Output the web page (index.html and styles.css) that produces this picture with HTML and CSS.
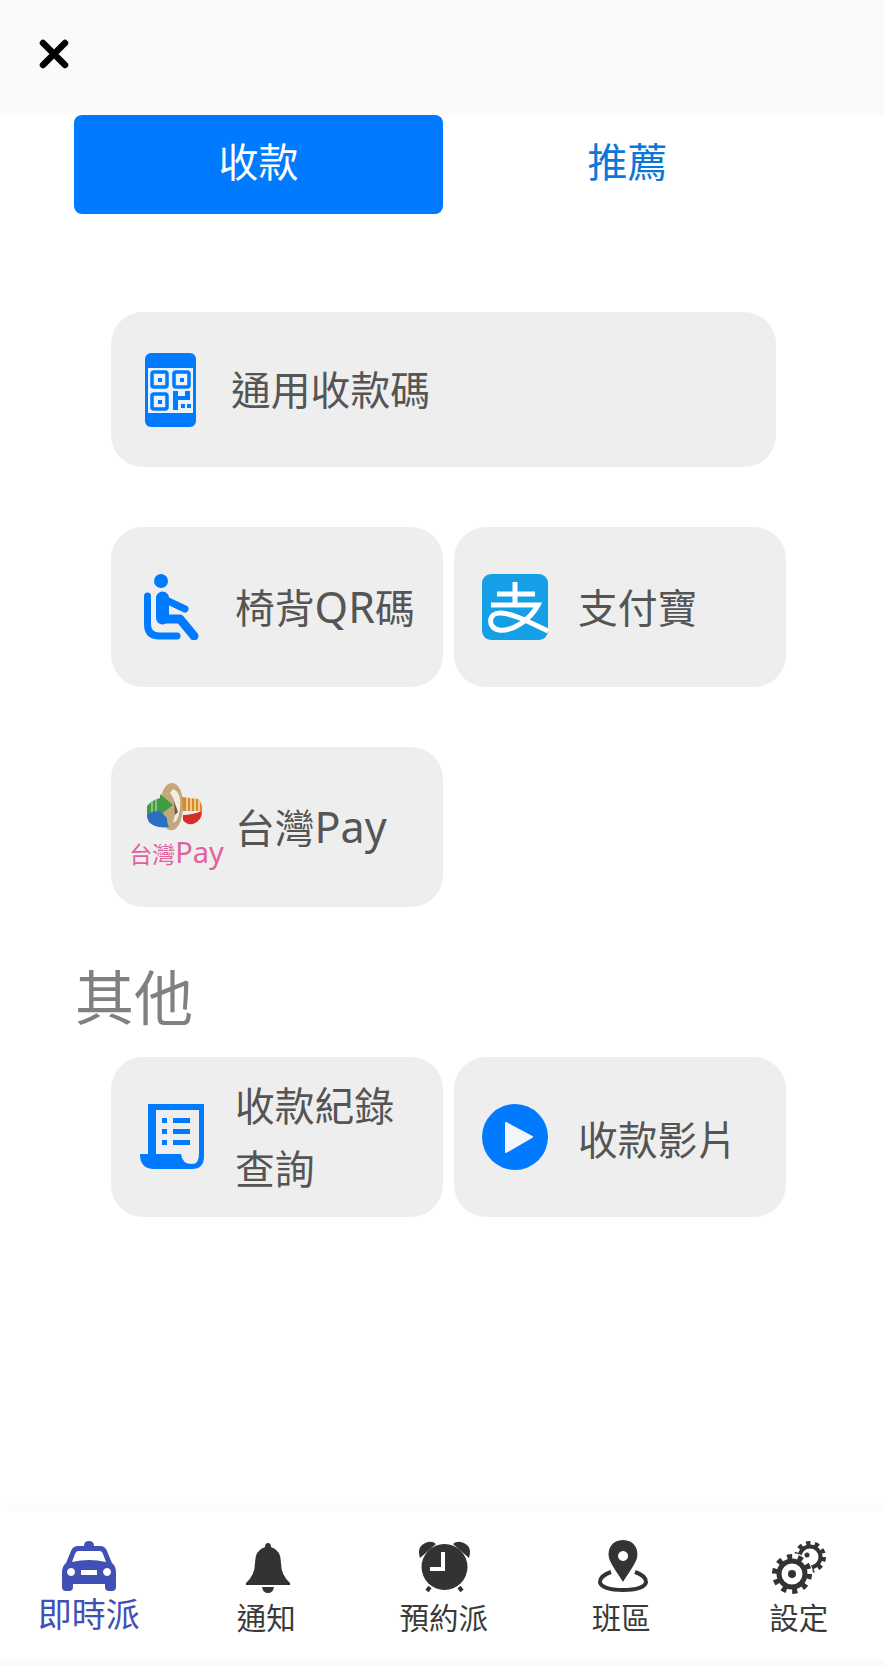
FILE: index.html
```html
<!DOCTYPE html>
<html lang="zh-Hant">
<head>
  <meta charset="UTF-8">
  <meta name="viewport" content="width=device-width, initial-scale=1.0">
  <title>收款</title>
  <link rel="stylesheet" href="styles.css">
</head>
<body>
  <div class="topbar">
    <svg class="close-icon" viewBox="0 0 30 30"><path d="M4 4 L26 26 M26 4 L4 26"/></svg>
  </div>

  <div class="tabs">
    <div class="tab active">收款</div>
    <div class="tab">推薦</div>
  </div>

  <div class="content">
    <div class="row first">
      <div class="card wide">
        <div class="card-icon">
          <svg width="51" height="74" viewBox="0 0 51 74">
            <rect width="51" height="74" rx="6" fill="#007aff"/>
            <rect x="3" y="15" width="45" height="45" fill="#eaf2fb"/>
            <g fill="none" stroke="#007aff" stroke-width="3.500">
              <rect x="7" y="19" width="15" height="15" rx="2"/>
              <rect x="29" y="19" width="15" height="15" rx="2"/>
              <rect x="7" y="41" width="15" height="15" rx="2"/>
            </g>
            <g fill="#007aff">
              <rect x="13" y="25" width="4" height="4"/>
              <rect x="35" y="25" width="4" height="4"/>
              <rect x="13" y="47" width="4" height="4"/>
              <path d="M28 38h5v5h7v-5h5v9H33v10h-5z"/>
              <rect x="36" y="51" width="4" height="4"/>
              <rect x="42" y="51" width="4" height="4"/>
            </g>
          </svg>
        </div>
        <div class="card-text">通用收款碼</div>
      </div>
    </div>

    <div class="row">
      <div class="card">
        <div class="card-icon">
          <svg width="56" height="66" viewBox="0 0 56 66">
            <circle cx="17" cy="7" r="7" fill="#007aff"/>
            <g fill="none" stroke="#007aff" stroke-linecap="round" stroke-linejoin="round">
              <path d="M3.500 22 V50 Q3.500 62 15 62 H33" stroke-width="7"/>
              <path d="M18.500 24 V44" stroke-width="13"/>
              <path d="M18 45 H36 L50 62" stroke-width="9"/>
              <path d="M22 26 L41 35" stroke-width="7"/>
            </g>
          </svg>
        </div>
        <div class="card-text">椅背<span class="latin">QR</span>碼</div>
      </div>
      <div class="card">
        <div class="card-icon">
          <svg width="66" height="66" viewBox="0 0 66 66">
            <rect width="66" height="66" rx="9" fill="#149fe6"/>
            <g fill="none" stroke="#fff" stroke-width="5">
              <path d="M15 20 H53"/>
              <path d="M33 8 V31"/>
              <path d="M9 31 H56 C48 46 30 58 17 56 C5 54 6 38 19 39 C32 40 47 48 66 57"/>
            </g>
          </svg>
        </div>
        <div class="card-text">支付寶</div>
      </div>
    </div>

    <div class="row">
      <div class="card">
        <div class="card-icon">
          <div class="twpay">
            <svg width="60" height="50" viewBox="0 0 60 50">
              <path d="M25 1 C33 0 38 12 37 26 C36 40 31 50 24 48 C17 47 13 36 14 23 C15 10 19 2 25 1z" fill="#c4a77d"/>
              <path d="M27 7 C33 9 35 16 34 26 C33 36 30 41 27 40 C30 33 31 18 24 11z" fill="#f3ece0"/>
              <path d="M28 19 L32 30 L29 33z" fill="#6e5a3e"/>
              <path d="M1 24 Q6 18 14 16 V12 L27 23 L14 33 V29 Q7 30 1 36z" fill="#3f9c45"/>
              <path d="M6 19 V30 M10 17 V29" stroke="#9fd09a" stroke-width="1.500"/>
              <path d="M1 33 Q7 29 14 29 L21 36 Q21 42 23 45 Q9 47 3 40 Q1 37 1 33z" fill="#2b6fc4"/>
              <path d="M36 15 L52 17 Q57 22 56 29 L37 29z" fill="#d98a2e"/>
              <path d="M41 15 V29 M45 16 V29 M49 16 V29 M53 18 V29" stroke="#f4dfae" stroke-width="1.500"/>
              <path d="M37 33 Q46 33 56 29 Q56 39 47 42 Q40 43 37 38z" fill="#d92b25"/>
            </svg>
            <div class="twpay-name">台灣<span class="twpay-latin">Pay</span></div>
          </div>
        </div>
        <div class="card-text">台灣<span class="latin">Pay</span></div>
      </div>
    </div>

    <h2 class="section-title">其他</h2>

    <div class="row">
      <div class="card">
        <div class="card-icon">
          <svg width="64" height="66" viewBox="0 0 64 66">
            <path fill="#007aff" fill-rule="evenodd" d="M8 0 H64 V52 Q64 65 52 65 H14 Q0 65 0 50 H8z M16 6 V50 H41 Q42 60 52 60 Q59 60 59 50 V6z"/>
            <g fill="#007aff">
              <rect x="22" y="14" width="5" height="5"/>
              <rect x="33" y="14" width="17" height="5"/>
              <rect x="22" y="25" width="5" height="5"/>
              <rect x="33" y="25" width="17" height="5"/>
              <rect x="22" y="36" width="5" height="5"/>
              <rect x="33" y="36" width="17" height="5"/>
            </g>
          </svg>
        </div>
        <div class="card-text">收款紀錄<br>查詢</div>
      </div>
      <div class="card">
        <div class="card-icon">
          <svg width="66" height="66" viewBox="0 0 66 66">
            <circle cx="33" cy="33" r="33" fill="#007aff"/>
            <path d="M24 19 L50 33 L24 48z" fill="#f2f6fb" stroke="#f2f6fb" stroke-width="2" stroke-linejoin="round"/>
          </svg>
        </div>
        <div class="card-text low">收款影片</div>
      </div>
    </div>
  </div>

  <div class="bottom-nav">
    <div class="nav-item active">
      <svg width="54" height="50" viewBox="0 0 54 50">
        <path fill="#3f51b5" fill-rule="evenodd" d="M22 5 Q22 0 27 0 Q32 0 32 5 H38 Q43 5 45 10 L50 22 Q54 25 54 32 V46 Q54 50 50 50 H47 Q43 50 43 46 V43 H11 V46 Q11 50 7 50 H4 Q0 50 0 46 V32 Q0 25 4 22 L9 10 Q11 5 16 5z M16 10 Q14 10 13 13 L10 21 Q27 17 44 21 L41 13 Q40 10 38 10z M9 27 a4 4 0 1 0 0.100 0z M45 27 a4 4 0 1 0 0.100 0z M19 29 V34 H35 V29z"/>
      </svg>
      <span>即時派</span>
    </div>
    <div class="nav-item">
      <svg width="44" height="50" viewBox="-2 -2 44 50">
        <path fill="#333" d="M22 0 Q25 0 25 4 Q35 7 35 20 Q35 32 44 40 V42 H0 V40 Q9 32 9 20 Q9 7 19 4 Q19 0 22 0z M16 44 H28 Q27 50 22 50 Q17 50 16 44z"/>
      </svg>
      <span>通知</span>
    </div>
    <div class="nav-item">
      <svg width="53" height="50" viewBox="-1 0 53 50">
        <circle cx="26.500" cy="26" r="23" fill="#333"/>
        <path d="M2 17 Q-2 4 10 1 Q15 0 18 3z M51 17 Q55 4 43 1 Q38 0 35 3z" fill="#333"/>
        <path d="M12 46 L9 50 M41 46 L44 50" stroke="#333" stroke-width="4"/>
        <path d="M25 11 V28 H12" fill="none" stroke="#fff" stroke-width="4"/>
      </svg>
      <span>預約派</span>
    </div>
    <div class="nav-item">
      <svg width="50" height="52" viewBox="-2 0 50 52">
        <path fill="#333" fill-rule="evenodd" d="M25 0 C36 0 41 9 39 18 C37 25 29 35 25 42 C21 35 13 25 11 18 C9 9 14 0 25 0z M25 11 a5 5 0 1 0 0.100 0z"/>
        <path d="M13 32 C4 35 2 39 2 42 C2 47 12 50 25 50 C38 50 48 47 48 42 C48 39 46 35 37 32" fill="none" stroke="#333" stroke-width="4"/>
      </svg>
      <span>班區</span>
    </div>
    <div class="nav-item">
      <svg width="54" height="54" viewBox="0 -2 54 54">
        <g fill="none" stroke="#333">
          <circle cx="38" cy="16" r="10.500" stroke-width="4"/>
          <circle cx="38" cy="16" r="14" stroke-width="4" stroke-dasharray="4.400 4.400"/>
        </g>
        <circle cx="35" cy="14" r="2.500" fill="#333"/>
        <circle cx="20" cy="33" r="21" fill="#fff"/>
        <g fill="none" stroke="#333">
          <circle cx="20" cy="33" r="13" stroke-width="5"/>
          <circle cx="20" cy="33" r="17" stroke-width="6" stroke-dasharray="5 5.680"/>
        </g>
        <circle cx="20" cy="33" r="4" fill="#333"/>
      </svg>
      <span>設定</span>
    </div>
  </div>
</body>
</html>
```

FILE: styles.css
```css
* {
  margin: 0;
  padding: 0;
  box-sizing: border-box;
  font-family: 'Noto Sans', 'Noto Sans CJK TC', sans-serif;
}

body {
  width: 100%;
  height: 100vh;
  display: flex;
  flex-direction: column;
  background: #fff;
  overflow: hidden;
}

.topbar {
  height: 115px;
  padding: 39px 0 0 39px;
  background: #fafafa;
  flex-shrink: 0;
}

.close-icon {
  display: block;
  width: 30px;
  height: 30px;
}

.close-icon path {
  fill: none;
  stroke: #000;
  stroke-width: 6.500;
  stroke-linecap: round;
}

.tabs {
  display: flex;
  margin-left: 74px;
  flex-shrink: 0;
}

.tab {
  width: 369px;
  height: 99px;
  padding-bottom: 10px;
  display: flex;
  align-items: center;
  justify-content: center;
  font-size: 40px;
  color: #0a78d8;
  border-radius: 8px;
}

.tab.active {
  background: #007aff;
  color: #fff;
}

.content {
  flex: 1;
}

.row {
  display: flex;
  gap: 11px;
  margin: 60px 0 0 111px;
}

.row.first {
  margin-top: 98px;
}

.card {
  width: 332px;
  height: 160px;
  display: flex;
  align-items: center;
  background: #eee;
  border-radius: 32px;
}

.card.wide {
  width: 665px;
  height: 155px;
}

.card-icon {
  width: 124px;
  padding-right: 2px;
  display: flex;
  justify-content: center;
  flex-shrink: 0;
}

.card.wide .card-icon {
  width: 120px;
}

.card-text {
  font-size: 39.800px;
  line-height: 63px;
  color: #555;
}

.card-text.low {
  padding-top: 4px;
}

.latin {
  font-size: 43px;
}

.twpay {
  display: flex;
  flex-direction: column;
  align-items: center;
  margin-left: 9px;
}

.twpay-name {
  margin-top: 2px;
  font-size: 23px;
  line-height: 36px;
  color: #e0629f;
  white-space: nowrap;
}

.twpay-latin {
  font-size: 29px;
}

.section-title {
  margin: 47px 0 0 75px;
  font-size: 59px;
  font-weight: 400;
  line-height: 86px;
  color: #808080;
}

.section-title + .row {
  margin-top: 17px;
}

.bottom-nav {
  height: 155px;
  display: flex;
  align-items: flex-start;
  background: #fff;
  border-bottom: 7px solid #fafafa;
  box-shadow: 0 -6px 14px rgba(0, 0, 0, 0.025);
  flex-shrink: 0;
}

.nav-item {
  width: 177.500px;
  height: 100%;
  padding-top: 28px;
  display: flex;
  flex-direction: column;
  align-items: center;
  flex-shrink: 0;
  font-size: 29.500px;
  line-height: 44px;
  color: #3a3a3a;
}

.nav-item svg {
  display: block;
  height: 54px;
  overflow: visible;
}

.nav-item span {
  margin-top: 3px;
}

.nav-item.active {
  font-size: 34px;
  color: #3f51b5;
}

.nav-item.active span {
  margin-top: -1px;
}
```
